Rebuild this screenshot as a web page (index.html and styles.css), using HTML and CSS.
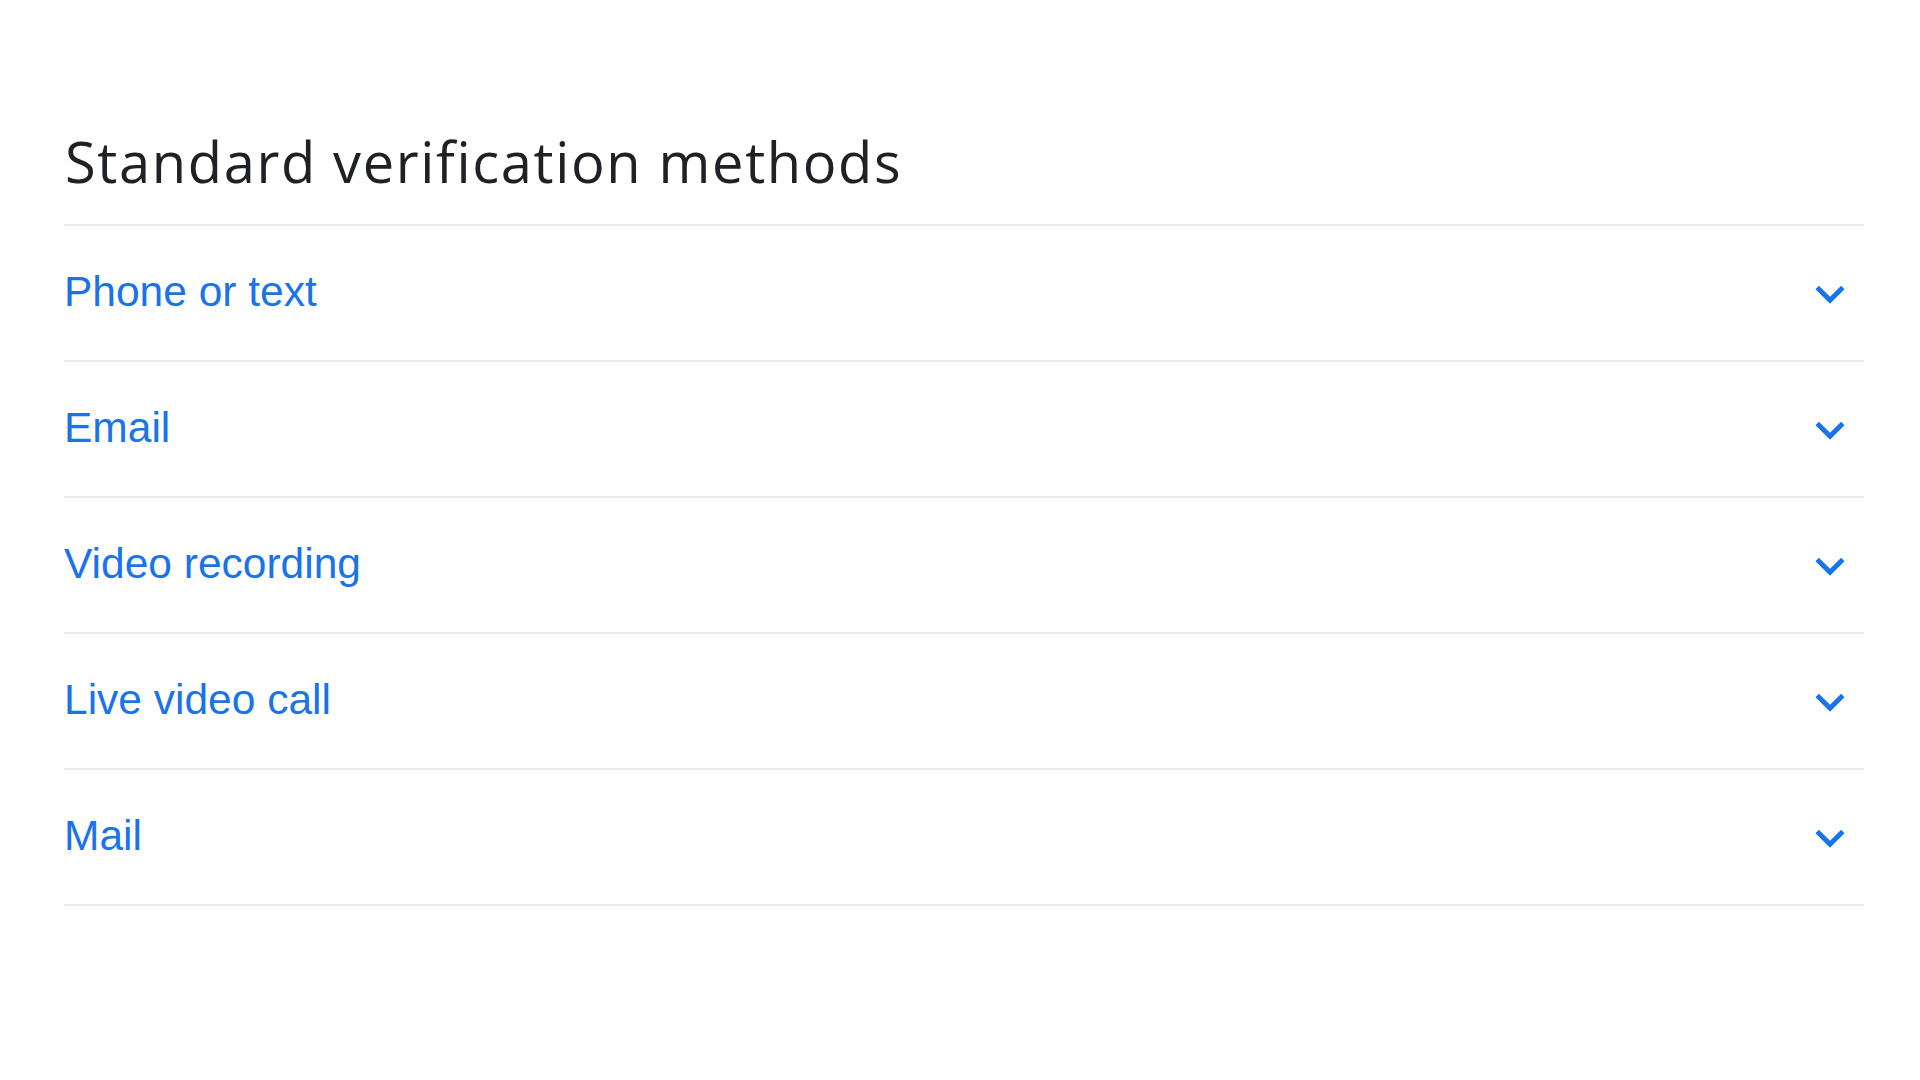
FILE: index.html
```html
<!DOCTYPE html>
<html lang="en">
<head>
<meta charset="utf-8">
<title>Standard verification methods</title>
<link rel="stylesheet" href="styles.css">
</head>
<body>
<main class="page">
  <h1 class="title">Standard verification methods</h1>
  <ul class="methods">
    <li class="method"><span class="label">Phone or text</span><svg class="chev" viewBox="0 0 24 24"><path d="M16.59 8.59L12 13.17 7.41 8.59 6 10l6 6 6-6z"/></svg></li>
    <li class="method"><span class="label">Email</span><svg class="chev" viewBox="0 0 24 24"><path d="M16.59 8.59L12 13.17 7.41 8.59 6 10l6 6 6-6z"/></svg></li>
    <li class="method"><span class="label">Video recording</span><svg class="chev" viewBox="0 0 24 24"><path d="M16.59 8.59L12 13.17 7.41 8.59 6 10l6 6 6-6z"/></svg></li>
    <li class="method"><span class="label">Live video call</span><svg class="chev" viewBox="0 0 24 24"><path d="M16.59 8.59L12 13.17 7.41 8.59 6 10l6 6 6-6z"/></svg></li>
    <li class="method"><span class="label">Mail</span><svg class="chev" viewBox="0 0 24 24"><path d="M16.59 8.59L12 13.17 7.41 8.59 6 10l6 6 6-6z"/></svg></li>
  </ul>
</main>
</body>
</html>
```
FILE: styles.css
```css
html, body {
  margin: 0;
  padding: 0;
  background: #ffffff;
}
.page {
  width: 1800px;
  padding: 129px 0 0 64px;
}
.title {
  margin: 0 0 31px 0;
  font-family: "Open Sans", "Liberation Sans", sans-serif;
  font-weight: 400;
  font-size: 56px;
  line-height: 64px;
  letter-spacing: 1.65px;
  color: #202124;
  padding-left: 1px;
}
.methods {
  list-style: none;
  margin: 0;
  padding: 0;
  border-top: 2px solid #e8eaed;
}
.method {
  display: flex;
  align-items: center;
  justify-content: space-between;
  height: 134px;
  border-bottom: 2px solid #e8eaed;
  padding-right: 5px;
}
.label {
  font-family: "Liberation Sans", Arial, sans-serif;
  font-size: 42.5px;
  line-height: 48px;
  color: #1a73e8;
  margin-top: -2px;
}
.chev {
  width: 58px;
  height: 58px;
  fill: #1a73e8;
  margin-top: 2px;
}
```
